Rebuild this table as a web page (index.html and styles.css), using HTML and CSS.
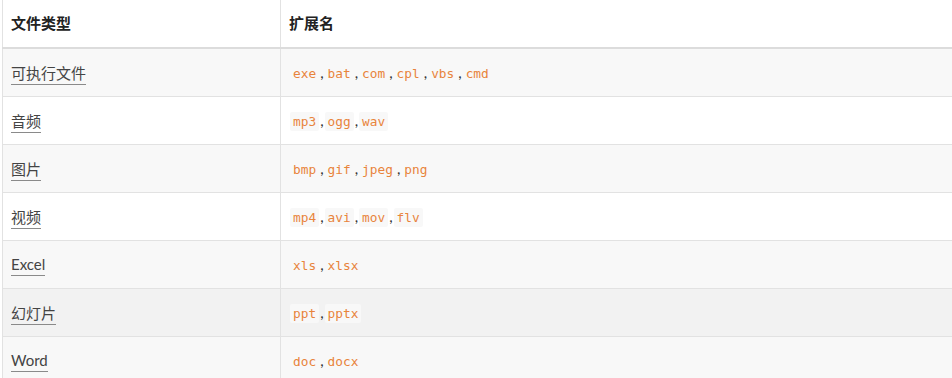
FILE: index.html
```html
<!DOCTYPE html>
<html lang="zh-CN">
<head>
    <meta charset="UTF-8">
    <title>文件类型</title>
    <link rel="stylesheet" href="styles.css">
</head>
<body>

    <div class="wrap">

        <table class="types">
            <thead>
                <tr>
                    <th class="col-type">文件类型</th>
                    <th>扩展名</th>
                </tr>
            </thead>
            <tbody>
                <tr>
                    <td><a href="#">可执行文件</a></td>
                    <td><code>exe</code>,<code>bat</code>,<code>com</code>,<code>cpl</code>,<code>vbs</code>,<code>cmd</code></td>
                </tr>
                <tr>
                    <td><a href="#">音频</a></td>
                    <td><code>mp3</code>,<code>ogg</code>,<code>wav</code></td>
                </tr>
                <tr>
                    <td><a href="#">图片</a></td>
                    <td><code>bmp</code>,<code>gif</code>,<code>jpeg</code>,<code>png</code></td>
                </tr>
                <tr>
                    <td><a href="#">视频</a></td>
                    <td><code>mp4</code>,<code>avi</code>,<code>mov</code>,<code>flv</code></td>
                </tr>
                <tr>
                    <td><a href="#">Excel</a></td>
                    <td><code>xls</code>,<code>xlsx</code></td>
                </tr>
                <tr class="hover">
                    <td><a href="#">幻灯片</a></td>
                    <td><code>ppt</code>,<code>pptx</code></td>
                </tr>
                <tr>
                    <td><a href="#">Word</a></td>
                    <td><code>doc</code>,<code>docx</code></td>
                </tr>
            </tbody>
        </table>

    </div>

</body>
</html>
```

FILE: styles.css
```css
* {
    box-sizing: border-box;
}

body {
    margin: 0;
    background: #fff;
    color: #333;
    font-family: Lato, "Noto Sans CJK SC", sans-serif;
    font-size: 15px;
    overflow: hidden;
}

.wrap {
    padding-left: 2px;
}

.types {
    border-collapse: collapse;
    width: 100%;
    border-left: 1px solid #e2e2e2;
}

.types th,
.types td {
    text-align: left;
    padding: 0 8px;
    border-right: 1px solid #e2e2e2;
    vertical-align: middle;
}

.types th:last-child,
.types td:last-child {
    border-right: 0;
}

.types th {
    height: 48px;
    font-weight: bold;
    color: #222;
    border-bottom: 2px solid #dcdcdc;
    padding-bottom: 3px;
}

.types td {
    height: 48px;
    border-bottom: 1px solid #e2e2e2;
}

.col-type {
    width: 278px;
}

.types tbody tr:nth-child(odd) {
    background: #f8f8f8;
}

.types tbody tr.hover {
    background: #f2f2f2;
}

.types a {
    color: #444;
    text-decoration: none;
    border-bottom: 1px solid #8a8a8a;
    padding-bottom: 2px;
}

.types code {
    font-family: "DejaVu Sans Mono", monospace;
    font-size: 12.8px;
    color: #e8843c;
    background: #f8f8f8;
    padding: 2px 3px;
    margin: 0 1px;
    border-radius: 2px;
}
```
